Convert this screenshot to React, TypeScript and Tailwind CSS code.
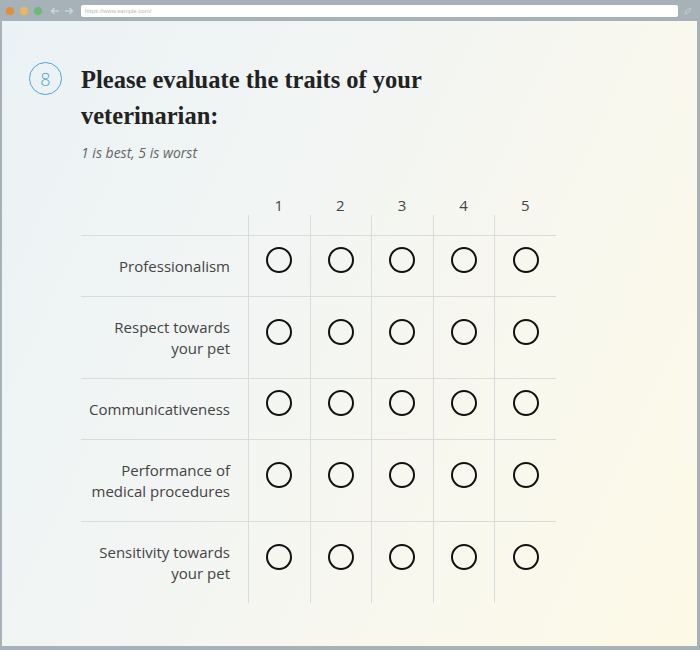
import { useState } from 'react';

const traits = [
  { id: 'prof', lines: ['Professionalism'] },
  { id: 'respect', lines: ['Respect towards', 'your pet'] },
  { id: 'comm', lines: ['Communicativeness'] },
  { id: 'perf', lines: ['Performance of', 'medical procedures'] },
  { id: 'sens', lines: ['Sensitivity towards', 'your pet'] },
];

const scores = [1, 2, 3, 4, 5];

function BrowserBar() {
  return (
    <div className="h-[21px] flex items-center shrink-0 pl-[6px] pr-[8px]">
      <div className="flex items-center gap-[6px]">
        <span className="w-[8px] h-[8px] rounded-full bg-[#e08e3c]" />
        <span className="w-[8px] h-[8px] rounded-full bg-[#e9b760]" />
        <span className="w-[8px] h-[8px] rounded-full bg-[#70b879]" />
      </div>
      <div className="flex items-center gap-[4px] ml-[8px] text-[#cdd4d8]">
        <svg width="10" height="8" viewBox="0 0 10 8" fill="none" stroke="currentColor" strokeWidth="1.5">
          <path d="M9 4H1.5M4.5 1L1.5 4l3 3" />
        </svg>
        <svg width="10" height="8" viewBox="0 0 10 8" fill="none" stroke="currentColor" strokeWidth="1.5">
          <path d="M1 4h7.5M5.5 1l3 3-3 3" />
        </svg>
      </div>
      <div className="ml-[7px] flex-1 h-[12px] bg-white rounded-[2px] flex items-center px-[4px]">
        <span className="text-[6px] leading-none text-[#b4b9bd] font-['Liberation_Sans',sans-serif]">
          https://www.sample.com/
        </span>
      </div>
      <svg className="ml-[6px]" width="8" height="8" viewBox="0 0 8 8" fill="none" stroke="#c3cace" strokeWidth="1">
        <path d="M1 7l1-3 4-3 1 1-3 4z" />
      </svg>
    </div>
  );
}

export default function App() {
  const [answers, setAnswers] = useState<Record<string, number>>({});

  return (
    <div className="w-[700px] h-[650px] bg-[#a7b1b8] flex flex-col overflow-hidden">
      <BrowserBar />
      <div className="flex-1 ml-[2px] mr-[3px] mb-[4px] bg-[linear-gradient(115deg,#ebf2f5_0%,#f2f5f3_40%,#f9f8ee_70%,#fcf9e6_100%)] font-['Open_Sans',sans-serif]">
        <div className="flex pt-[41px]">
          {/* Question number */}
          <div className="ml-[27px] w-[33px] h-[33px] rounded-full border border-[#4ea6d2] flex items-center justify-center shrink-0">
            <span className="text-[18px] font-light text-[#4ea6d2] leading-none">8</span>
          </div>

          <div className="ml-[19px]">
            <h1 className="font-['Liberation_Serif',serif] font-bold text-[24.5px] leading-[36px] text-[#222] w-[360px]">
              Please evaluate the traits of your veterinarian:
            </h1>
            <p className="mt-[9px] text-[14px] leading-[20px] italic text-[#666]">1 is best, 5 is worst</p>

            {/* Header */}
            <div className="mt-[32px] flex">
              <div className="w-[167px]" />
              {scores.map((s) => (
                <div key={s} className="w-[61.6px] text-center text-[15px] leading-[20px] text-[#444]">
                  {s}
                </div>
              ))}
            </div>
            <div className="flex h-[20px]">
              <div className="w-[167px]" />
              {scores.map((s) => (
                <div key={s} className="w-[61.6px] border-l border-[#d9dcdb]" />
              ))}
            </div>

            {/* Rows */}
            {traits.map((t) => (
              <div key={t.id} className="flex border-t border-[#d9dcdb] w-[475px]">
                <div className="w-[167px] pr-[18px] py-[19.5px] text-right text-[15px] leading-[21px] text-[#444]">
                  {t.lines.map((l) => (
                    <div key={l}>{l}</div>
                  ))}
                </div>
                {scores.map((s) => (
                  <div
                    key={s}
                    className="w-[61.6px] border-l border-[#d9dcdb] flex items-center justify-center"
                  >
                    <button
                      onClick={() => setAnswers({ ...answers, [t.id]: s })}
                      className="w-[26px] h-[26px] mb-[12px] rounded-full border-2 border-[#111] flex items-center justify-center"
                    >
                      {answers[t.id] === s && <span className="w-[12px] h-[12px] rounded-full bg-[#111]" />}
                    </button>
                  </div>
                ))}
              </div>
            ))}
          </div>
        </div>
      </div>
    </div>
  );
}
